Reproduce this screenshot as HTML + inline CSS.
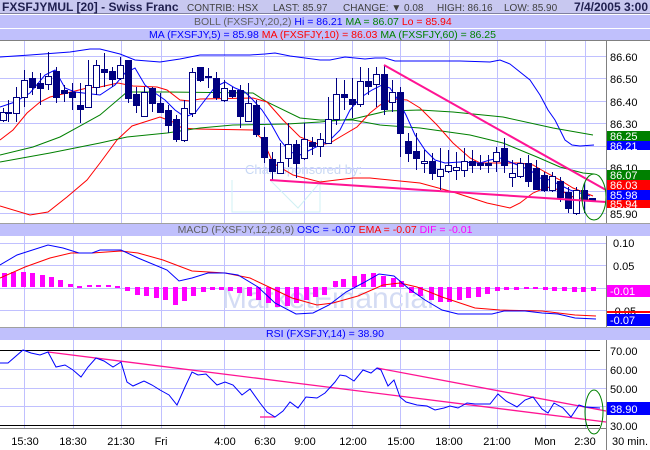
<!DOCTYPE html>
<html><head><meta charset="utf-8"><style>
html,body{margin:0;padding:0;background:#fff;width:650px;height:450px;overflow:hidden}
svg{display:block;font-family:"Liberation Sans",Arial,sans-serif}
</style></head><body>
<svg width="650" height="450" viewBox="0 0 650 450" xmlns="http://www.w3.org/2000/svg">
<rect width="650" height="450" fill="#fff"/>
<!-- header bars -->
<rect x="0" y="0" width="650" height="13" fill="#c8c8f0"/>
<line x1="0" y1="13.5" x2="650" y2="13.5" stroke="#8080a0"/>
<rect x="0" y="15" width="650" height="13" fill="#c0c0fc"/>
<rect x="0" y="29" width="650" height="11" fill="#c0c0fc"/>
<line x1="0" y1="28.5" x2="650" y2="28.5" stroke="#fff"/>
<line x1="0" y1="40.5" x2="650" y2="40.5" stroke="#808080"/>
<text x="2" y="11" font-size="12" font-weight="bold" fill="#202050">FXSFJYMUL [20] - Swiss Franc</text>
<text x="187" y="11" font-size="10" fill="#404040">CONTRIB: HSX</text>
<text x="273" y="11" font-size="10" fill="#404040">LAST: 85.97</text>
<text x="343" y="11" font-size="10" fill="#404040">CHANGE: ▼ 0.08</text>
<text x="437" y="11" font-size="10" fill="#404040">HIGH: 86.16</text>
<text x="504" y="11" font-size="10" fill="#404040">LOW: 85.90</text>
<text x="648" y="11" font-size="12" font-weight="bold" fill="#202050" text-anchor="end">7/4/2005 3:00</text>
<text x="194" y="25" font-size="10.5"><tspan fill="#606060">BOLL (FXSFJY,20,2) </tspan><tspan fill="#0000ff">Hi = 86.21 </tspan><tspan fill="#008000">MA = 86.07 </tspan><tspan fill="#ff0000">Lo = 85.94</tspan></text>
<text x="149" y="38" font-size="10.5"><tspan fill="#0000ff">MA (FXSFJY,5) = 85.98 </tspan><tspan fill="#ff0000">MA (FXSFJY,10) = 86.03 </tspan><tspan fill="#008000">MA (FXSFJY,60) = 86.25</tspan></text>

<!-- MACD and RSI header bars -->
<rect x="0" y="224" width="650" height="12" fill="#c0c0fc"/>
<text x="325" y="233" font-size="10.5" text-anchor="middle"><tspan fill="#606060">MACD (FXSFJY,12,26,9) </tspan><tspan fill="#0000ff">OSC = -0.07 </tspan><tspan fill="#ff0000">EMA = -0.07 </tspan><tspan fill="#ff00ff">DIF = -0.01</tspan></text>
<line x1="0" y1="223.5" x2="650" y2="223.5" stroke="#a0a0a0"/>
<line x1="0" y1="327.5" x2="650" y2="327.5" stroke="#a0a0a0"/>
<rect x="0" y="328" width="650" height="12" fill="#c0c0fc"/>
<text x="325" y="337" font-size="10.5" text-anchor="middle" fill="#0000ff">RSI (FXSFJY,14) = 38.90</text>

<!-- grid -->
<g stroke="#c0c0ff" stroke-width="1">
<line x1="24.5" y1="41" x2="24.5" y2="223"/><line x1="73.5" y1="41" x2="73.5" y2="223"/><line x1="121.5" y1="41" x2="121.5" y2="223"/><line x1="161.5" y1="41" x2="161.5" y2="223"/><line x1="224.5" y1="41" x2="224.5" y2="223"/><line x1="264.5" y1="41" x2="264.5" y2="223"/><line x1="304.5" y1="41" x2="304.5" y2="223"/><line x1="352.5" y1="41" x2="352.5" y2="223"/><line x1="400.5" y1="41" x2="400.5" y2="223"/><line x1="449.5" y1="41" x2="449.5" y2="223"/><line x1="497.5" y1="41" x2="497.5" y2="223"/><line x1="545.5" y1="41" x2="545.5" y2="223"/><line x1="585.5" y1="41" x2="585.5" y2="223"/>
<line x1="24.5" y1="236" x2="24.5" y2="327"/><line x1="73.5" y1="236" x2="73.5" y2="327"/><line x1="121.5" y1="236" x2="121.5" y2="327"/><line x1="161.5" y1="236" x2="161.5" y2="327"/><line x1="224.5" y1="236" x2="224.5" y2="327"/><line x1="264.5" y1="236" x2="264.5" y2="327"/><line x1="304.5" y1="236" x2="304.5" y2="327"/><line x1="352.5" y1="236" x2="352.5" y2="327"/><line x1="400.5" y1="236" x2="400.5" y2="327"/><line x1="449.5" y1="236" x2="449.5" y2="327"/><line x1="497.5" y1="236" x2="497.5" y2="327"/><line x1="545.5" y1="236" x2="545.5" y2="327"/><line x1="585.5" y1="236" x2="585.5" y2="327"/>
<line x1="24.5" y1="340" x2="24.5" y2="428"/><line x1="73.5" y1="340" x2="73.5" y2="428"/><line x1="121.5" y1="340" x2="121.5" y2="428"/><line x1="161.5" y1="340" x2="161.5" y2="428"/><line x1="224.5" y1="340" x2="224.5" y2="428"/><line x1="264.5" y1="340" x2="264.5" y2="428"/><line x1="304.5" y1="340" x2="304.5" y2="428"/><line x1="352.5" y1="340" x2="352.5" y2="428"/><line x1="400.5" y1="340" x2="400.5" y2="428"/><line x1="449.5" y1="340" x2="449.5" y2="428"/><line x1="497.5" y1="340" x2="497.5" y2="428"/><line x1="545.5" y1="340" x2="545.5" y2="428"/><line x1="585.5" y1="340" x2="585.5" y2="428"/>
<line x1="0" y1="56.5" x2="606" y2="56.5"/><line x1="0" y1="78.5" x2="606" y2="78.5"/><line x1="0" y1="101.5" x2="606" y2="101.5"/><line x1="0" y1="123.5" x2="606" y2="123.5"/><line x1="0" y1="146.5" x2="606" y2="146.5"/><line x1="0" y1="168.5" x2="606" y2="168.5"/><line x1="0" y1="191.5" x2="606" y2="191.5"/><line x1="0" y1="213.5" x2="606" y2="213.5"/>
<line x1="0" y1="243.5" x2="606" y2="243.5"/><line x1="0" y1="265.5" x2="606" y2="265.5"/><line x1="0" y1="288.5" x2="606" y2="288.5"/><line x1="0" y1="310.5" x2="606" y2="310.5"/>
<line x1="0" y1="369.5" x2="606" y2="369.5"/><line x1="0" y1="388.5" x2="606" y2="388.5"/><line x1="0" y1="406.5" x2="606" y2="406.5"/>
</g>

<!-- watermark -->
<text x="245" y="174" font-size="13" fill="#c8d8f4">Chart sponsored by:</text>
<polyline points="232,180 232,212 320,212 320,180" fill="none" stroke="#d0f0f4"/>
<polyline points="270,180 298,208 322,180" fill="none" stroke="#d0f0f4"/>
<text x="222" y="308" font-size="30" fill="#d4dcf4">MarketFinancial</text>

<!-- Bollinger upper -->
<polyline fill="none" stroke="#0000ff" stroke-width="1" points="0,57 30,55 70,52 90,49 100,49 120,54 135,60 160,62 180,59 200,55 250,55 265,54 275,53 290,56 320,60 330,60 345,57 365,59 375,58 385,58 395,61 460,61 490,62 500,60 510,64 520,72 530,80 540,95 548,110 555,120 560,130 565,140 572,145 580,146 594,145"/>
<!-- Bollinger lower -->
<polyline fill="none" stroke="#ff0000" stroke-width="1" points="0,206 30,215 48,212 67,197 87,180 100,163 117,140 132,126 160,117 173,122 182,128 197,129 253,130 263,140 273,163 293,175 320,182 353,178 370,178 420,183 453,192 487,203 510,208 520,203 533,193 547,187 560,190 573,197 593,200"/>
<!-- greens -->
<polyline fill="none" stroke="#008000" stroke-width="1" points="0,155 33,147 60,137 100,115 127,92 167,92 253,93 267,102 300,118 320,120 353,120 380,125 420,128 470,135 503,143 537,157 560,167 583,173 594,174"/>
<polyline fill="none" stroke="#008000" stroke-width="1" points="0,162 50,153 100,143 127,137 167,133 200,128 233,125 287,124 320,122 353,119 387,111 420,110 453,112 503,117 553,128 593,135"/>
<!-- MA10 red -->
<polyline fill="none" stroke="#ff0000" stroke-width="1" points="0,140 13,130 27,113 40,102 50,97 67,93 87,88 100,87 118,83 133,86 157,87 167,90 180,100 190,101 200,99 253,98 267,102 283,120 300,137 320,145 330,143 340,137 357,127 370,113 380,105 393,99 407,100 420,108 437,125 453,143 470,158 480,163 520,163 533,165 545,172 560,180 573,188 593,196"/>
<!-- MA5 blue -->
<polyline fill="none" stroke="#0000ff" stroke-width="1" points="0,107 15,102 30,93 45,75 55,70 65,88 75,92 100,95 115,85 125,73 135,68 145,85 155,93 165,100 175,110 185,117 195,113 205,100 215,87 225,82 235,88 245,92 253,100 262,110 270,122 280,140 290,152 300,155 310,150 320,145 330,140 340,130 350,110 360,98 372,90 382,85 390,88 398,100 406,115 415,135 425,150 435,160 445,163 460,162 480,163 490,160 500,158 515,164 530,170 540,178 550,180 560,185 570,190 580,193 590,196"/>

<!-- candles -->
<g stroke="#000080" stroke-width="1">
<line x1="3.5" y1="108" x2="3.5" y2="122"/><rect x="0.5" y="112.5" width="6" height="8" fill="#fff"/>
<line x1="8.5" y1="100" x2="8.5" y2="122"/><rect x="5.5" y="112.5" width="6" height="1" fill="#000080"/>
<line x1="16.5" y1="87" x2="16.5" y2="122"/><rect x="13.5" y="97.5" width="6" height="16" fill="#fff"/>
<line x1="24.5" y1="70" x2="24.5" y2="107"/><rect x="21.5" y="80.5" width="6" height="17" fill="#fff"/>
<line x1="32.5" y1="72" x2="32.5" y2="95"/><rect x="29.5" y="78.5" width="6" height="9" fill="#000080"/>
<line x1="40.5" y1="73" x2="40.5" y2="105"/><rect x="37.5" y="83.5" width="6" height="5" fill="#000080"/>
<line x1="48.5" y1="52" x2="48.5" y2="90"/><rect x="45.5" y="76.5" width="6" height="8" fill="#fff"/>
<line x1="56.5" y1="67" x2="56.5" y2="103"/><rect x="53.5" y="71.5" width="6" height="26" fill="#000080"/>
<line x1="64.5" y1="85" x2="64.5" y2="102"/><rect x="61.5" y="90.5" width="6" height="3" fill="#000080"/>
<line x1="72.5" y1="83" x2="72.5" y2="110"/><rect x="69.5" y="92.5" width="6" height="5" fill="#000080"/>
<line x1="80.5" y1="83" x2="80.5" y2="123"/><rect x="77.5" y="105.5" width="6" height="4" fill="#000080"/>
<line x1="88.5" y1="60" x2="88.5" y2="108"/><rect x="85.5" y="85.5" width="6" height="22" fill="#fff"/>
<line x1="96.5" y1="60" x2="96.5" y2="95"/><rect x="93.5" y="65.5" width="6" height="22" fill="#fff"/>
<line x1="104.5" y1="53" x2="104.5" y2="87"/><rect x="101.5" y="69.5" width="6" height="3" fill="#000080"/>
<line x1="112.5" y1="67" x2="112.5" y2="87"/><rect x="109.5" y="71.5" width="6" height="8" fill="#000080"/>
<line x1="120.5" y1="57" x2="120.5" y2="80"/><rect x="117.5" y="65.5" width="6" height="13" fill="#fff"/>
<line x1="128.5" y1="60" x2="128.5" y2="103"/><rect x="125.5" y="60.5" width="6" height="38" fill="#000080"/>
<line x1="136.5" y1="87" x2="136.5" y2="113"/><rect x="133.5" y="94.5" width="6" height="11" fill="#000080"/>
<line x1="144.5" y1="87" x2="144.5" y2="117"/><rect x="141.5" y="92.5" width="6" height="24" fill="#fff"/>
<line x1="152.5" y1="87" x2="152.5" y2="112"/><rect x="149.5" y="88.5" width="6" height="15" fill="#000080"/>
<line x1="160.5" y1="93" x2="160.5" y2="112"/><rect x="157.5" y="103.5" width="6" height="9" fill="#000080"/>
<line x1="168.5" y1="105" x2="168.5" y2="133"/><rect x="165.5" y="110.5" width="6" height="15" fill="#000080"/>
<line x1="176.5" y1="115" x2="176.5" y2="142"/><rect x="173.5" y="119.5" width="6" height="20" fill="#000080"/>
<line x1="184.5" y1="100" x2="184.5" y2="142"/><rect x="181.5" y="108.5" width="6" height="32" fill="#fff"/>
<line x1="192.5" y1="68" x2="192.5" y2="117"/><rect x="189.5" y="72.5" width="6" height="41" fill="#fff"/>
<line x1="200.5" y1="67" x2="200.5" y2="82"/><rect x="197.5" y="67.5" width="6" height="13" fill="#000080"/>
<line x1="208.5" y1="68" x2="208.5" y2="88"/><rect x="205.5" y="76.5" width="6" height="1" fill="#000080"/>
<line x1="216.5" y1="72" x2="216.5" y2="100"/><rect x="213.5" y="78.5" width="6" height="19" fill="#000080"/>
<line x1="224.5" y1="80" x2="224.5" y2="102"/><rect x="221.5" y="88.5" width="6" height="12" fill="#fff"/>
<line x1="232.5" y1="87" x2="232.5" y2="98"/><rect x="229.5" y="90.5" width="6" height="6" fill="#000080"/>
<line x1="240.5" y1="85" x2="240.5" y2="128"/><rect x="237.5" y="90.5" width="6" height="26" fill="#000080"/>
<line x1="248.5" y1="83" x2="248.5" y2="122"/><rect x="245.5" y="103.5" width="6" height="18" fill="#fff"/>
<line x1="256.5" y1="100" x2="256.5" y2="137"/><rect x="253.5" y="105.5" width="6" height="29" fill="#000080"/>
<line x1="264.5" y1="127" x2="264.5" y2="163"/><rect x="261.5" y="137.5" width="6" height="20" fill="#000080"/>
<line x1="272.5" y1="152" x2="272.5" y2="180"/><rect x="269.5" y="159.5" width="6" height="12" fill="#000080"/>
<line x1="280.5" y1="143" x2="280.5" y2="173"/><rect x="277.5" y="162.5" width="6" height="11" fill="#fff"/>
<line x1="288.5" y1="123" x2="288.5" y2="167"/><rect x="285.5" y="144.5" width="6" height="14" fill="#fff"/>
<line x1="296.5" y1="140" x2="296.5" y2="178"/><rect x="293.5" y="144.5" width="6" height="19" fill="#000080"/>
<line x1="304.5" y1="123" x2="304.5" y2="160"/><rect x="301.5" y="139.5" width="6" height="19" fill="#fff"/>
<line x1="312.5" y1="137" x2="312.5" y2="155"/><rect x="309.5" y="142.5" width="6" height="4" fill="#000080"/>
<line x1="320.5" y1="133" x2="320.5" y2="157"/><rect x="317.5" y="139.5" width="6" height="7" fill="#fff"/>
<line x1="328.5" y1="97" x2="328.5" y2="143"/><rect x="325.5" y="119.5" width="6" height="24" fill="#fff"/>
<line x1="336.5" y1="78" x2="336.5" y2="125"/><rect x="333.5" y="94.5" width="6" height="25" fill="#fff"/>
<line x1="344.5" y1="80" x2="344.5" y2="110"/><rect x="341.5" y="94.5" width="6" height="3" fill="#000080"/>
<line x1="352.5" y1="78" x2="352.5" y2="118"/><rect x="349.5" y="99.5" width="6" height="5" fill="#000080"/>
<line x1="360.5" y1="67" x2="360.5" y2="107"/><rect x="357.5" y="81.5" width="6" height="23" fill="#fff"/>
<line x1="368.5" y1="68" x2="368.5" y2="95"/><rect x="365.5" y="81.5" width="6" height="5" fill="#000080"/>
<line x1="376.5" y1="67" x2="376.5" y2="107"/><rect x="373.5" y="74.5" width="6" height="10" fill="#fff"/>
<line x1="384.5" y1="65" x2="384.5" y2="115"/><rect x="381.5" y="74.5" width="6" height="35" fill="#000080"/>
<line x1="392.5" y1="80" x2="392.5" y2="112"/><rect x="389.5" y="92.5" width="6" height="10" fill="#fff"/>
<line x1="400.5" y1="87" x2="400.5" y2="157"/><rect x="397.5" y="92.5" width="6" height="41" fill="#000080"/>
<line x1="408.5" y1="133" x2="408.5" y2="162"/><rect x="405.5" y="141.5" width="6" height="12" fill="#000080"/>
<line x1="416.5" y1="133" x2="416.5" y2="170"/><rect x="413.5" y="151.5" width="6" height="7" fill="#000080"/>
<line x1="424.5" y1="150" x2="424.5" y2="173"/><rect x="421.5" y="161.5" width="6" height="2" fill="#fff"/>
<line x1="432.5" y1="153" x2="432.5" y2="180"/><rect x="429.5" y="161.5" width="6" height="12" fill="#000080"/>
<line x1="440.5" y1="148" x2="440.5" y2="190"/><rect x="437.5" y="169.5" width="6" height="7" fill="#fff"/>
<line x1="448.5" y1="150" x2="448.5" y2="173"/><rect x="445.5" y="165.5" width="6" height="6" fill="#fff"/>
<line x1="456.5" y1="152" x2="456.5" y2="180"/><rect x="453.5" y="167.5" width="6" height="3" fill="#fff"/>
<line x1="464.5" y1="148" x2="464.5" y2="177"/><rect x="461.5" y="161.5" width="6" height="9" fill="#fff"/>
<line x1="472.5" y1="150" x2="472.5" y2="173"/><rect x="469.5" y="161.5" width="6" height="4" fill="#000080"/>
<line x1="480.5" y1="155" x2="480.5" y2="170"/><rect x="477.5" y="163.5" width="6" height="2" fill="#000080"/>
<line x1="488.5" y1="155" x2="488.5" y2="173"/><rect x="485.5" y="163.5" width="6" height="2" fill="#000080"/>
<line x1="496.5" y1="147" x2="496.5" y2="172"/><rect x="493.5" y="152.5" width="6" height="9" fill="#fff"/>
<line x1="504.5" y1="138" x2="504.5" y2="173"/><rect x="501.5" y="148.5" width="6" height="17" fill="#000080"/>
<line x1="512.5" y1="160" x2="512.5" y2="187"/><rect x="509.5" y="173.5" width="6" height="4" fill="#fff"/>
<line x1="520.5" y1="158" x2="520.5" y2="178"/><rect x="517.5" y="163.5" width="6" height="13" fill="#fff"/>
<line x1="528.5" y1="155" x2="528.5" y2="187"/><rect x="525.5" y="163.5" width="6" height="18" fill="#000080"/>
<line x1="536.5" y1="160" x2="536.5" y2="190"/><rect x="533.5" y="168.5" width="6" height="21" fill="#000080"/>
<line x1="544.5" y1="172" x2="544.5" y2="192"/><rect x="541.5" y="175.5" width="6" height="15" fill="#000080"/>
<line x1="552.5" y1="172" x2="552.5" y2="192"/><rect x="549.5" y="176.5" width="6" height="14" fill="#fff"/>
<line x1="560.5" y1="177" x2="560.5" y2="202"/><rect x="557.5" y="181.5" width="6" height="16" fill="#000080"/>
<line x1="568.5" y1="187" x2="568.5" y2="213"/><rect x="565.5" y="192.5" width="6" height="16" fill="#000080"/>
<line x1="576.5" y1="187" x2="576.5" y2="215"/><rect x="573.5" y="190.5" width="6" height="23" fill="#fff"/>
<line x1="584.5" y1="183" x2="584.5" y2="213"/><rect x="581.5" y="190.5" width="6" height="9" fill="#000080"/>
<rect x="589.5" y="198.5" width="6" height="2" fill="#000080"/>
</g>

<!-- trendlines -->
<line x1="384" y1="65" x2="606" y2="190" stroke="#ff1493" stroke-width="2"/>
<line x1="270" y1="180" x2="606" y2="202" stroke="#ff1493" stroke-width="2"/>
<ellipse cx="594" cy="197" rx="12" ry="23" fill="none" stroke="#008000" stroke-width="1"/>

<!-- MACD histogram -->
<g fill="#ff00ff">
<rect x="2" y="273" width="5" height="14"/><rect x="11" y="272" width="5" height="15"/><rect x="21" y="272" width="5" height="15"/><rect x="30" y="273" width="5" height="14"/><rect x="40" y="275" width="5" height="12"/><rect x="49" y="277" width="5" height="10"/><rect x="58" y="280" width="5" height="7"/><rect x="68" y="284" width="5" height="3"/><rect x="77" y="286" width="5" height="2"/><rect x="87" y="285" width="5" height="2"/><rect x="96" y="285" width="5" height="2"/><rect x="106" y="285" width="5" height="2"/><rect x="115" y="286" width="5" height="2"/>
<rect x="125" y="287" width="5" height="4"/><rect x="135" y="287" width="5" height="8"/><rect x="144" y="287" width="5" height="9"/><rect x="154" y="287" width="5" height="11"/><rect x="163" y="287" width="5" height="13"/><rect x="173" y="287" width="5" height="18"/><rect x="182" y="287" width="5" height="14"/><rect x="191" y="287" width="5" height="9"/><rect x="201" y="287" width="5" height="5"/><rect x="210" y="287" width="5" height="3"/><rect x="219" y="287" width="5" height="3"/><rect x="228" y="287" width="5" height="4"/><rect x="237" y="287" width="5" height="6"/><rect x="247" y="287" width="5" height="9"/><rect x="256" y="287" width="5" height="13"/><rect x="266" y="287" width="5" height="16"/><rect x="275" y="287" width="5" height="20"/><rect x="285" y="287" width="5" height="19"/><rect x="294" y="287" width="5" height="16"/><rect x="304" y="287" width="5" height="13"/><rect x="313" y="287" width="5" height="10"/><rect x="322" y="287" width="5" height="8"/>
<rect x="333" y="281" width="5" height="6"/><rect x="341" y="279" width="5" height="8"/><rect x="352" y="276" width="5" height="11"/><rect x="361" y="274" width="5" height="13"/><rect x="371" y="273" width="5" height="14"/><rect x="381" y="276" width="5" height="11"/><rect x="391" y="278" width="5" height="9"/><rect x="399" y="281" width="5" height="6"/>
<rect x="409" y="287" width="5" height="6"/><rect x="418" y="287" width="5" height="9"/><rect x="429" y="287" width="5" height="13"/><rect x="438" y="287" width="5" height="15"/><rect x="447" y="287" width="5" height="15"/><rect x="457" y="287" width="5" height="13"/><rect x="466" y="287" width="5" height="11"/><rect x="476" y="287" width="5" height="10"/><rect x="485" y="287" width="5" height="7"/><rect x="495" y="287" width="5" height="4"/><rect x="504" y="287" width="5" height="3"/><rect x="514" y="287" width="5" height="3"/><rect x="524" y="287" width="5" height="2"/><rect x="533" y="287" width="5" height="2"/><rect x="543" y="287" width="5" height="3"/><rect x="552" y="287" width="5" height="4"/><rect x="562" y="287" width="5" height="4"/><rect x="572" y="287" width="5" height="5"/><rect x="581" y="287" width="5" height="5"/><rect x="591" y="287" width="5" height="4"/>
</g>
<!-- MACD lines -->
<polyline fill="none" stroke="#ff0000" stroke-width="1" points="0,278 25,267 50,258 71,253 92,253 121,251 138,253 163,260 192,271 225,273 250,278 271,288 292,298 317,305 333,303 358,296 383,285 400,283 417,287 442,297 475,308 500,310 542,311 575,315 596,316"/>
<polyline fill="none" stroke="#0000ff" stroke-width="1" points="0,265 17,255 48,245 63,248 79,253 92,253 100,250 121,250 138,258 167,270 179,281 192,278 208,273 225,273 238,275 258,287 275,303 296,314 313,313 329,305 346,292 363,283 379,274 394,276 408,288 425,300 442,310 458,314 492,314 504,311 525,311 542,313 558,314 575,318 596,319"/>

<!-- RSI -->
<line x1="0" y1="350.5" x2="600" y2="350.5" stroke="#000" stroke-width="1"/>
<line x1="0" y1="425.5" x2="600" y2="425.5" stroke="#000" stroke-width="1"/>
<line x1="48" y1="352" x2="606" y2="422" stroke="#ff1493" stroke-width="1.3"/>
<line x1="377" y1="368" x2="606" y2="411" stroke="#ff1493" stroke-width="1.3"/>
<line x1="260" y1="417" x2="275" y2="417" stroke="#ff1493" stroke-width="1.3"/>
<polyline fill="none" stroke="#0000ff" stroke-width="1" points="0,363 8,363 23,350 31,353 40,355 48,352 56,367 65,365 73,370 81,377 88,367 96,358 104,361 113,367 121,362 127,382 133,386 144,381 152,385 160,390 169,395 177,405 185,387 192,372 198,375 206,374 217,385 225,382 233,385 242,395 250,389 260,403 267,412 275,417 283,411 290,402 298,408 306,397 317,398 325,393 335,382 340,375 346,376 354,381 363,370 371,373 377,368 381,370 388,386 394,380 400,397 406,402 417,405 427,406 435,410 444,408 450,406 458,408 467,403 475,404 490,404 498,394 506,401 517,407 525,400 533,397 542,409 548,413 554,403 563,408 571,417 579,405 585,407 600,408"/>
<ellipse cx="594" cy="412" rx="9" ry="22" fill="none" stroke="#008000" stroke-width="1"/>

<!-- right axis -->
<line x1="606.5" y1="41" x2="606.5" y2="223" stroke="#808080"/>
<line x1="606.5" y1="236" x2="606.5" y2="327" stroke="#808080"/>
<line x1="606.5" y1="340" x2="606.5" y2="450" stroke="#808080"/>
<line x1="0" y1="428.5" x2="606" y2="428.5" stroke="#808080"/>
<g font-size="11" fill="#000">
<text x="610" y="61">86.60</text><text x="610" y="83">86.50</text><text x="610" y="106">86.40</text><text x="610" y="128">86.30</text><text x="610" y="172">86.10</text><text x="610" y="218">85.90</text>
<text x="613" y="247">0.10</text><text x="613" y="270">0.05</text><text x="611" y="315">-0.05</text>
<text x="610" y="355">70.00</text><text x="610" y="374">60.00</text><text x="610" y="393">50.00</text><text x="610" y="430">30.00</text>
</g>
<g font-size="11" fill="#fff">
<rect x="607" y="131" width="43" height="10" fill="#008000"/><text x="610" y="140">86.25</text>
<rect x="607" y="141" width="43" height="9" fill="#0000ff"/><text x="610" y="150">86.21</text>
<rect x="607" y="170" width="43" height="10" fill="#008000"/><text x="610" y="179">86.07</text>
<rect x="607" y="180" width="43" height="10" fill="#ff0000"/><text x="610" y="189">86.03</text>
<rect x="607" y="190" width="43" height="10" fill="#0000ff"/><text x="610" y="199">85.98</text>
<rect x="607" y="200" width="43" height="8" fill="#ff0000"/><text x="610" y="208">85.94</text>
<rect x="607" y="285" width="43" height="12" fill="#ff00ff"/><text x="610" y="295">-0.01</text>
<rect x="607" y="311" width="43" height="2" fill="#ff0000"/>
<rect x="607" y="314" width="43" height="12" fill="#0000ff"/><text x="610" y="324">-0.07</text>
<rect x="607" y="402" width="43" height="13" fill="#0000ff"/><text x="610" y="413">38.90</text>
</g>

<!-- x axis -->
<g font-size="11" fill="#000" text-anchor="middle">
<text x="25" y="445">15:30</text><text x="73" y="445">18:30</text><text x="121" y="445">21:30</text><text x="161" y="445">Fri</text><text x="225" y="445">4:00</text><text x="265" y="445">6:30</text><text x="305" y="445">9:00</text><text x="353" y="445">12:00</text><text x="401" y="445">15:00</text><text x="449" y="445">18:00</text><text x="497" y="445">21:00</text><text x="545" y="445">Mon</text><text x="585" y="445">2:30</text><text x="630" y="445">30 min.</text>
</g>
</svg>
</body></html>
